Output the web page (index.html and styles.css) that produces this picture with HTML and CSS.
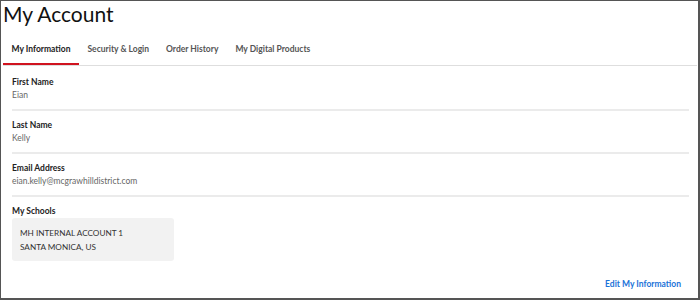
FILE: index.html
```html
<!DOCTYPE html>
<html lang="en">
<head>
    <meta charset="UTF-8">
    <meta name="viewport" content="width=device-width, initial-scale=1.0">
    <title>My Account</title>
    <link rel="stylesheet" href="styles.css">
</head>
<body>
    <div class="account">
        <h1 class="title">My Account</h1>
        <nav class="tabs">
            <a class="tab active" href="#">My Information</a>
            <a class="tab" href="#">Security &amp; Login</a>
            <a class="tab" href="#">Order History</a>
            <a class="tab" href="#">My Digital Products</a>
        </nav>
        <section class="info">
            <div class="field">
                <div class="field-label">First Name</div>
                <div class="field-value">Eian</div>
            </div>
            <div class="field">
                <div class="field-label">Last Name</div>
                <div class="field-value">Kelly</div>
            </div>
            <div class="field">
                <div class="field-label">Email Address</div>
                <div class="field-value">eian.kelly@mcgrawhilldistrict.com</div>
            </div>
            <div class="field schools">
                <div class="field-label">My Schools</div>
                <div class="school-card">
                    <div>MH INTERNAL ACCOUNT 1</div>
                    <div>SANTA MONICA, US</div>
                </div>
            </div>
            <div class="actions">
                <a class="edit-link" href="#">Edit My Information</a>
            </div>
        </section>
    </div>
</body>
</html>
```

FILE: styles.css
```css
    body {
        margin: 0;
        background: white;
        font-family: Lato, "Liberation Sans", Arial, sans-serif;
    }
    .account {
        box-sizing: border-box;
        width: 700px;
        height: 300px;
        border: 1px solid #555;
        border-right-width: 2px;
        border-bottom-width: 2px;
        overflow: hidden;
    }
    .title {
        margin: 0;
        padding-left: 2px;
        font-size: 21px;
        font-weight: 400;
        line-height: 1.2;
        color: #111;
    }
    .tabs {
        display: flex;
        margin: 0 1px 0 2px;
        border-bottom: 1px solid #dedede;
    }
    .tab {
        padding: 17px 8.5px 7.5px;
        font-size: 8.5px;
        font-weight: 700;
        line-height: 12px;
        color: #555;
        text-decoration: none;
        border-bottom: 2px solid transparent;
    }
    .tab.active {
        color: #222;
        border-bottom-color: #d0131f;
    }
    .info {
        padding: 2.3px 9px 0 11px;
    }
    .field {
        padding: 8.4px 0 6.6px;
        border-bottom: 2px solid #ebebeb;
    }
    .field-label {
        font-size: 8.5px;
        font-weight: 700;
        line-height: 13px;
        color: #222;
    }
    .field-value {
        font-size: 8.5px;
        line-height: 13px;
        color: #666;
    }
    .schools {
        padding-bottom: 0;
        border-bottom: none;
    }
    .school-card {
        box-sizing: border-box;
        width: 162px;
        padding: 7.5px 8px;
        background-color: #f2f2f2;
        border-radius: 3px;
        font-size: 8.2px;
        line-height: 14px;
        color: #333;
    }
    .actions {
        display: flex;
        justify-content: flex-end;
        margin-top: 17px;
        padding-right: 8px;
    }
    .edit-link {
        font-size: 8.5px;
        font-weight: 700;
        line-height: 13px;
        color: #1b72d8;
        text-decoration: none;
    }
```
